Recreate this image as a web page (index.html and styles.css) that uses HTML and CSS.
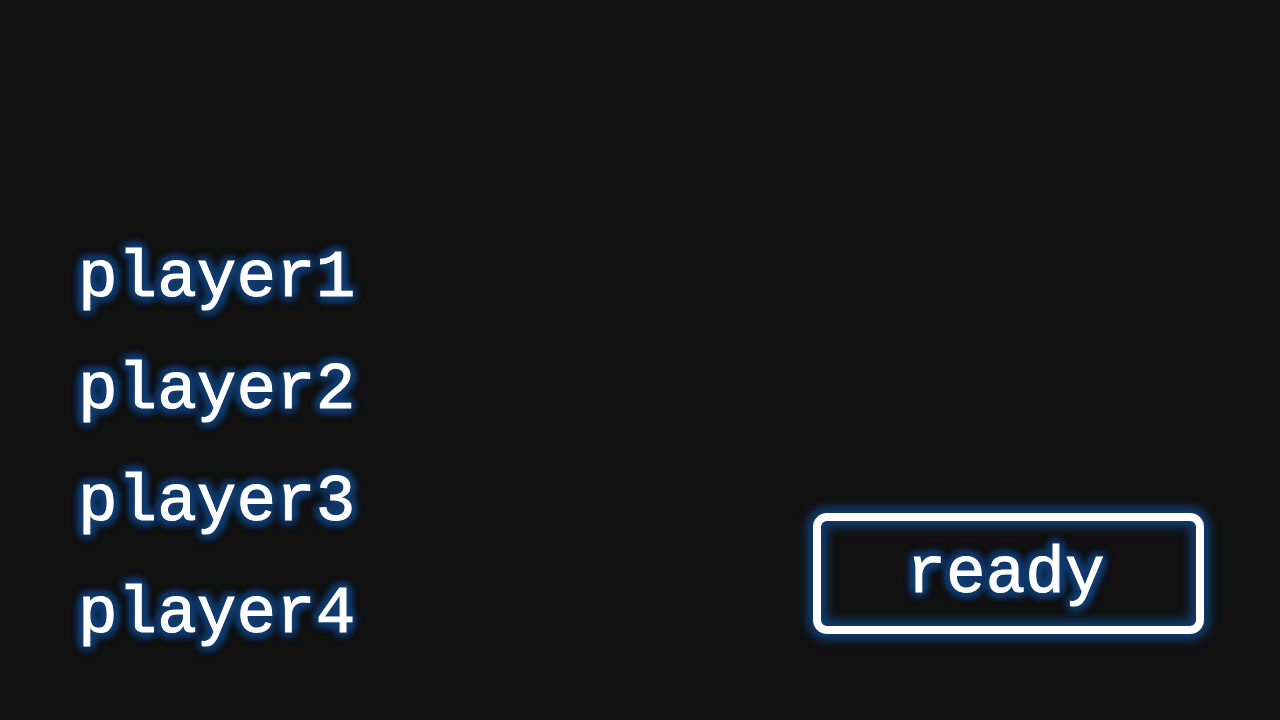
FILE: index.html
```html
<!DOCTYPE html>
<html lang="en">
<head>
<meta charset="utf-8">
<title>Lobby</title>
<link rel="stylesheet" href="styles.css">
</head>
<body>
<main class="lobby">
  <ul class="players">
    <li class="player">player1</li>
    <li class="player">player2</li>
    <li class="player">player3</li>
    <li class="player">player4</li>
  </ul>
  <button class="ready" type="button">ready</button>
</main>
</body>
</html>
```

FILE: styles.css
```css
:root {
  --glow: #123c70;
  --text-glow:
    5px 0 7px var(--glow), -5px 0 7px var(--glow),
    0 5px 7px var(--glow), 0 -5px 7px var(--glow),
    4px 4px 7px var(--glow), -4px -4px 7px var(--glow),
    4px -4px 7px var(--glow), -4px 4px 7px var(--glow);
}

* {
  box-sizing: border-box;
}

body {
  margin: 0;
  background: #111;
  color: #fff;
  font-family: "Liberation Mono", monospace;
  -webkit-text-stroke: 1px #fff;
}

.lobby {
  min-height: 100vh;
  display: flex;
  justify-content: space-between;
  align-items: flex-end;
  padding: 49px 76px 49px 78px;
}

.players {
  margin: 0;
  padding: 0;
  list-style: none;
}

.player {
  font-size: 66px;
  line-height: 112px;
  text-shadow: var(--text-glow);
}

.ready {
  width: 391px;
  height: 121px;
  margin-bottom: 37px;
  padding: 2px 6px 0 0;
  border: 8px solid #fff;
  border-radius: 14px;
  background: transparent;
  color: #fff;
  font: 66px "Liberation Mono", monospace;
  text-shadow: var(--text-glow);
  box-shadow: 0 0 10px 6px var(--glow), inset 0 0 10px 6px var(--glow);
  cursor: pointer;
}
```
